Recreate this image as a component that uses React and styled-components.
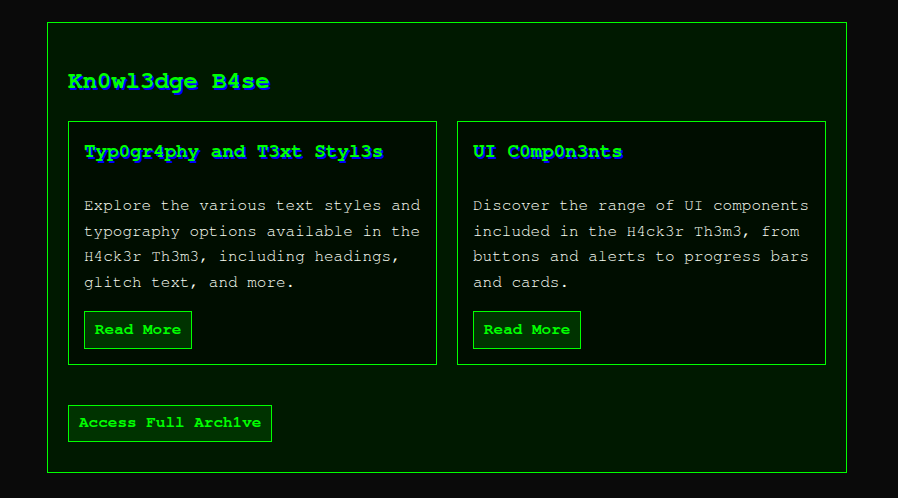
import React from "react";
import styled, { createGlobalStyle } from "styled-components";

const mono = `"Nimbus Mono PS", FreeMono, Courier, "Courier New", monospace`;

const GlobalStyle = createGlobalStyle`
  html, body {
    margin: 0;
    padding: 0;
    background-color: #0a0a0a;
  }
  body {
    font-family: ${mono};
  }
`;

const Page = styled.div`
  padding: 22px 51px 25px 47px;
`;

const Panel = styled.section`
  border: 1px solid #00ff00;
  background-color: #001900;
  padding: 20px 20px 30px 20px;
`;

const PanelTitle = styled.h2`
  margin: 24px 0 26px 0;
  font-size: 24px;
  line-height: 28px;
  font-weight: bold;
  color: #00ff00;
  text-shadow: 2px 2px 0 #0000ff;
`;

const CardGrid = styled.div`
  display: grid;
  grid-template-columns: 1fr 1fr;
  gap: 20px;
  margin-bottom: 40px;
`;

const Card = styled.article`
  display: flex;
  flex-direction: column;
  align-items: flex-start;
  border: 1px solid #00ff00;
  background-color: #000d00;
  padding: 15px;
`;

const CardTitle = styled.h3`
  margin: 0 0 26px 0;
  font-size: 19.2px;
  line-height: 30px;
  font-weight: bold;
  color: #00ff00;
  text-shadow: 2px 2px 0 #0000ff;
`;

const CardText = styled.p`
  margin: 0 0 16px 0;
  font-size: 16px;
  line-height: 25.6px;
  color: #fbfff5;
`;

const Button = styled.button`
  font-family: ${mono};
  font-size: 16px;
  font-weight: bold;
  line-height: ${props => (props.$wide ? "19px" : "20px")};
  color: #00ff00;
  background-color: #003300;
  border: 1px solid #00ff00;
  padding: 7px 10px 9px 10px;
  cursor: pointer;
`;

const cards = [
  {
    title: "Typ0gr4phy and T3xt Styl3s",
    text: "Explore the various text styles and typography options available in the H4ck3r Th3m3, including headings, glitch text, and more.",
  },
  {
    title: "UI C0mp0n3nts",
    text: "Discover the range of UI components included in the H4ck3r Th3m3, from buttons and alerts to progress bars and cards.",
  },
];

export default function App() {
  return (
    <>
      <GlobalStyle />
      <Page>
        <Panel>
          <PanelTitle>Kn0wl3dge B4se</PanelTitle>
          <CardGrid>
            {cards.map(card => (
              <Card key={card.title}>
                <CardTitle>{card.title}</CardTitle>
                <CardText>{card.text}</CardText>
                <Button>Read More</Button>
              </Card>
            ))}
          </CardGrid>
          <Button $wide>Access Full Arch1ve</Button>
        </Panel>
      </Page>
    </>
  );
}
